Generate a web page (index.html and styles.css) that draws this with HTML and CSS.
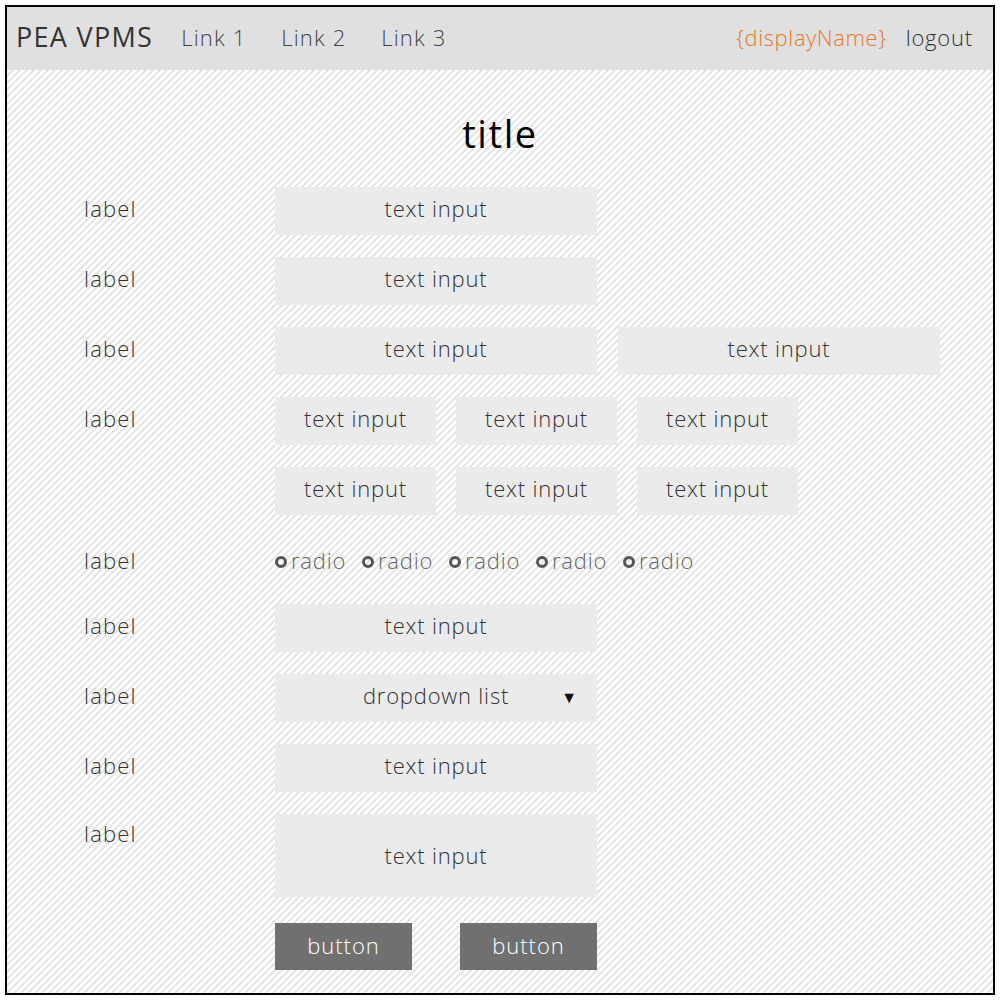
FILE: index.html
```html
<!DOCTYPE html>
<html>
<head>
<meta charset="utf-8">
<link rel="stylesheet" href="styles.css">
</head>
<body>
<div class="frame">
  <header class="topbar">
    <div class="brand">PEA VPMS</div>
    <nav class="nav">
      <a class="nav-link">Link 1</a>
      <a class="nav-link">Link 2</a>
      <a class="nav-link">Link 3</a>
    </nav>
    <div class="user">
      <span class="display-name">{displayName}</span>
      <span class="logout">logout</span>
    </div>
  </header>
  <main class="content">
    <h1 class="title">title</h1>
    <div class="form">
      <div class="row">
        <div class="label">label</div>
        <div class="fields"><div class="input w-full">text input</div></div>
      </div>
      <div class="row">
        <div class="label">label</div>
        <div class="fields"><div class="input w-full">text input</div></div>
      </div>
      <div class="row">
        <div class="label">label</div>
        <div class="fields gap-wide"><div class="input w-full">text input</div><div class="input w-full">text input</div></div>
      </div>
      <div class="row">
        <div class="label">label</div>
        <div class="fields"><div class="input w-third">text input</div><div class="input w-third">text input</div><div class="input w-third">text input</div></div>
      </div>
      <div class="row">
        <div class="label"></div>
        <div class="fields"><div class="input w-third">text input</div><div class="input w-third">text input</div><div class="input w-third">text input</div></div>
      </div>
      <div class="row radio-row">
        <div class="label">label</div>
        <div class="radios">
          <span class="radio"><span class="dot"></span>radio</span>
          <span class="radio"><span class="dot"></span>radio</span>
          <span class="radio"><span class="dot"></span>radio</span>
          <span class="radio"><span class="dot"></span>radio</span>
          <span class="radio"><span class="dot"></span>radio</span>
        </div>
      </div>
      <div class="row">
        <div class="label">label</div>
        <div class="fields"><div class="input w-full">text input</div></div>
      </div>
      <div class="row">
        <div class="label">label</div>
        <div class="fields"><div class="input w-full select"><span class="select-text">dropdown list</span><span class="arrow">&#9660;</span></div></div>
      </div>
      <div class="row">
        <div class="label">label</div>
        <div class="fields"><div class="input w-full">text input</div></div>
      </div>
      <div class="row">
        <div class="label label-top">label</div>
        <div class="fields"><div class="input w-full textarea">text input</div></div>
      </div>
      <div class="row buttons-row">
        <div class="label"></div>
        <div class="buttons"><div class="button">button</div><div class="button">button</div></div>
      </div>
    </div>
  </main>
</div>
</body>
</html>
```
FILE: styles.css
```css
* { box-sizing: border-box; }
html, body { margin: 0; padding: 0; background: #fff; }
body {
  font-family: "Open Sans", "Liberation Sans", sans-serif;
  font-weight: 300;
  color: #333;
  letter-spacing: 0.8px;
}
.frame {
  margin: 5px;
  width: 990px;
  height: 990px;
  border: 2px solid #000;
  background: repeating-linear-gradient(135deg, #fff 0px, #fff 3.3px, #e6e6e6 3.3px, #e6e6e6 4.95px);
  overflow: hidden;
}
.topbar {
  height: 63px;
  background: #e0e0e0;
  display: flex;
  align-items: center;
  padding: 0 20px 4px 9px;
}
.brand {
  font-size: 27px;
  font-weight: 400;
  color: #333;
  margin-right: 28px;
  letter-spacing: 1.3px;
}
.nav { display: flex; }
.nav-link {
  width: 100px;
  font-size: 22px;
  color: #444;
  letter-spacing: 1.2px;
}
.user {
  margin-left: auto;
  display: flex;
  gap: 19px;
  font-size: 22px;
}
.display-name { color: #e8782a; letter-spacing: 0.6px; }
.logout { color: #333; }
.content { padding: 40px 0 0 77px; }
.title {
  margin: 0 0 27px 0;
  height: 50px;
  line-height: 46px;
  font-size: 38px;
  font-weight: 400;
  color: #000;
  text-align: center;
  padding-right: 77px;
  letter-spacing: 1.6px;
}
.form { display: flex; flex-direction: column; gap: 22px; }
.row { display: flex; align-items: flex-start; }
.label {
  width: 191px;
  flex: none;
  height: 48px;
  line-height: 42px;
  font-size: 22px;
  color: #333;
  letter-spacing: 1.2px;
}
.label-top { line-height: 38px; }
.fields { display: flex; gap: 20px; }
.fields.gap-wide { gap: 21px; }
.input {
  height: 48px;
  background: #ebebeb;
  display: flex;
  align-items: center;
  justify-content: center;
  font-size: 22px;
  color: #333;
  padding-bottom: 6px;
}
.w-full { width: 322px; }
.w-third { width: 161px; }
.textarea { height: 83px; padding-bottom: 2px; }
.select { position: relative; }
.arrow {
  position: absolute;
  right: 19px;
  top: 12px;
  font-size: 16px;
  color: #111;
}
.radio-row .label { height: 45px; line-height: 46px; }
.radios { display: flex; height: 45px; align-items: center; padding-top: 1px; }
.radio {
  display: flex;
  align-items: center;
  width: 87px;
  font-size: 22px;
  color: #666;
}
.dot {
  width: 12px;
  height: 12px;
  border: 3px solid #555;
  border-radius: 50%;
  margin-right: 4px;
  margin-top: 3px;
}
.buttons-row { margin-top: 4px; }
.buttons { display: flex; gap: 48px; }
.button {
  width: 137px;
  height: 47px;
  background: #707070;
  color: #fff;
  font-size: 22px;
  display: flex;
  align-items: center;
  justify-content: center;
  padding-bottom: 3px;
  letter-spacing: 1px;
}
```
